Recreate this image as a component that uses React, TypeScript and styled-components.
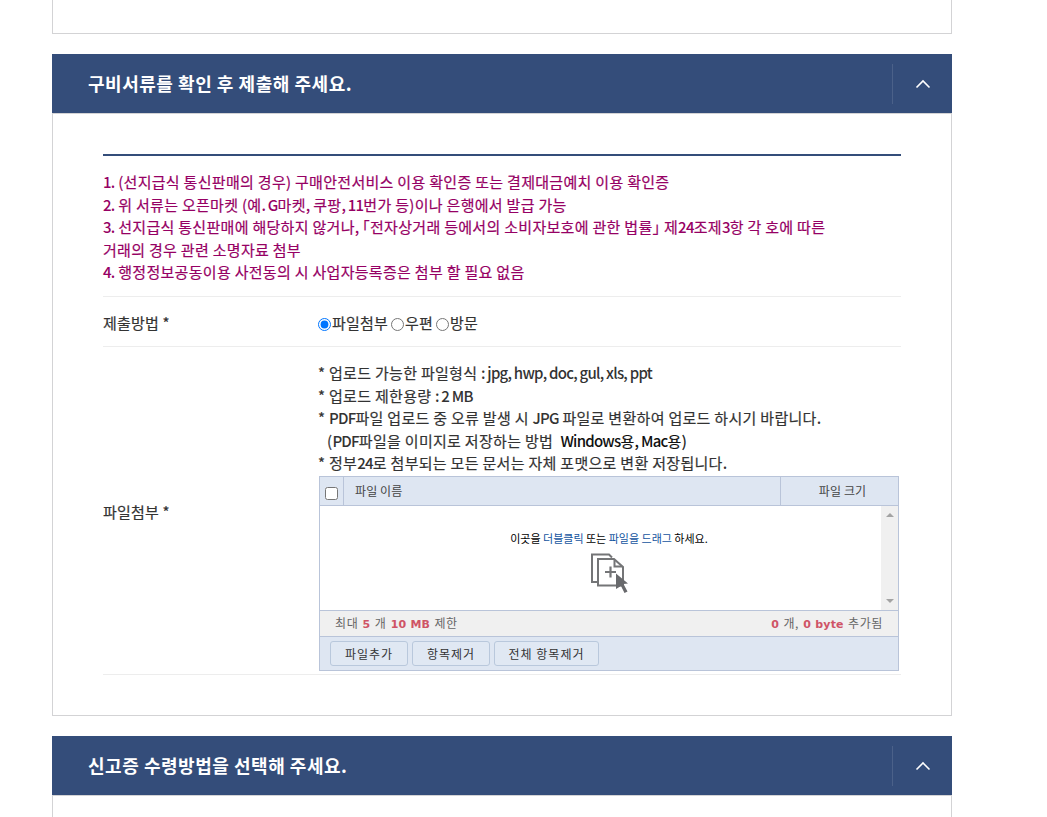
import React from "react";
import styled, { createGlobalStyle } from "styled-components";

interface LineProps {
  $track?: number;
  $indent?: number;
}

const GlobalStyle = createGlobalStyle`
  * {
    box-sizing: border-box;
  }
  body {
    margin: 0;
    background-color: #fff;
    color: #333;
    font-family: "Noto Sans CJK KR", "Noto Sans", sans-serif;
    font-size: 15px;
    line-height: 22.5px;
  }
`;

const Page = styled.main`
  display: flex;
  flex-direction: column;
  gap: 20px;
  width: 900px;
  height: 817px;
  margin-left: 52px;
  overflow: hidden;
`;

const PreviousPanel = styled.div`
  flex-shrink: 0;
  height: 34px;
  border: 1px solid #d3d3d5;
  border-top: 0;
`;

const Section = styled.section`
  flex-shrink: 0;
`;

const PanelHeader = styled.header`
  display: flex;
  align-items: center;
  justify-content: space-between;
  height: 59px;
  padding-left: 36px;
  background-color: #344d7a;
`;

const PanelTitle = styled.h2`
  margin: 0;
  color: #fff;
  font-size: 18px;
  font-weight: 700;
  letter-spacing: 0.53px;
  white-space: nowrap;
`;

const ToggleButton = styled.button`
  display: flex;
  align-items: center;
  justify-content: center;
  width: 60px;
  height: 40px;
  padding: 0;
  border: 0;
  border-left: 1px solid #4b6189;
  background: none;
`;

const PanelBody = styled.div<{ $height: number; $open?: boolean }>`
  height: ${({ $height }) => $height}px;
  padding: 40px 50px 0;
  border: 1px solid #d3d3d5;
  border-bottom-width: ${({ $open }) => ($open ? 0 : 1)}px;
`;

const Form = styled.div`
  border-top: 2px solid #344d7a;
`;

const Notice = styled.div`
  height: 141px;
  padding-top: 15px;
  border-bottom: 1px solid #ededed;
  color: #960064;
`;

const Line = styled.div<LineProps>`
  height: 22.5px;
  padding-left: ${({ $indent = 0 }) => $indent}px;
  letter-spacing: ${({ $track = 0.3 }) => $track}px;
  white-space: pre;
  font-feature-settings: "halt";
  -webkit-text-stroke: 0.2px currentColor;
`;

const Latin = styled.span`
  font-weight: 500;
  letter-spacing: -0.75px;
  -webkit-text-stroke: 0;
`;

const Row = styled.div<{ $height: number }>`
  display: grid;
  grid-template-columns: 215px 1fr;
  align-items: center;
  height: ${({ $height }) => $height}px;
  padding-top: 4px;
  border-bottom: 1px solid #ededed;
`;

const RadioGroup = styled.div`
  display: flex;
  gap: 3px;
  -webkit-text-stroke: 0.2px currentColor;
`;

const RadioLabel = styled.label`
  display: flex;
  align-items: center;
  gap: 1px;
  letter-spacing: 0.2px;
  input {
    width: 13px;
    height: 13px;
    margin: 2px 0 0;
  }
`;

const FileCell = styled.div`
  align-self: start;
  padding-top: 11px;
`;

const Dark = styled.span`
  color: #111;
`;

const Uploader = styled.div`
  display: flex;
  flex-direction: column;
  width: 580px;
  height: 195px;
  margin: 1.5px 0 0 1px;
  border: 1px solid #b9c4d9;
  color: #444;
  font-size: 12px;
  line-height: 18px;
`;

const ListHeader = styled.div`
  display: grid;
  grid-template-columns: 24px 437px 1fr;
  height: 28px;
  background-color: #dee6f2;
`;

const HeadCell = styled.div<{ $align?: string }>`
  display: flex;
  align-items: center;
  justify-content: ${({ $align = "flex-start" }) => $align};
  padding: 0 0 0 11px;
  border-right: 1px solid #b9c4d9;
  letter-spacing: 0.1px;
  &:first-child {
    padding: 5px 0 0 5px;
  }
  &:last-child {
    padding: 0 0 0 6px;
    border-right: 0;
  }
  input {
    width: 13px;
    height: 13px;
    margin: 0;
  }
`;

const DropArea = styled.div`
  display: flex;
  height: 105px;
  border-top: 1px solid #b9c4d9;
  background-color: #fff;
`;

const DropHint = styled.div`
  display: flex;
  flex: 1;
  flex-direction: column;
  align-items: center;
  padding: 23px 0 0 17px;
  color: #000;
  font-size: 11px;
`;

const HintText = styled.div`
  margin-bottom: 6px;
  white-space: nowrap;
  em {
    color: #1454a0;
    font-style: normal;
  }
`;

const ScrollBar = styled.div`
  display: flex;
  flex-direction: column;
  align-items: center;
  justify-content: space-between;
  width: 17px;
  padding: 7px 0;
  background-color: #f0f0f0;
`;

const Arrow = styled.i<{ $down?: boolean }>`
  border: 4px solid transparent;
  border-top-width: ${({ $down }) => ($down ? 4 : 0)}px;
  border-bottom-width: ${({ $down }) => ($down ? 0 : 4)}px;
  border-${({ $down }) => ($down ? "top" : "bottom")}-color: #a3a3a3;
`;

const StatusBar = styled.div`
  display: flex;
  align-items: center;
  justify-content: space-between;
  height: 26px;
  padding: 0 15px;
  border-top: 1px solid #b9c4d9;
  background-color: #f0f0f0;
  color: #666;
  letter-spacing: 0.6px;
  word-spacing: 1px;
  b {
    color: #cf5466;
    font-family: "DejaVu Sans", sans-serif;
    font-size: 11px;
    letter-spacing: 0.2px;
    word-spacing: 0;
  }
`;

const ButtonBar = styled.div`
  display: flex;
  flex: 1;
  gap: 4px;
  padding: 4px 10px;
  border-top: 1px solid #b9c4d9;
  background-color: #dee6f2;
`;

const BarButton = styled.button<{ $width: number }>`
  width: ${({ $width }) => $width}px;
  height: 25px;
  padding: 0 0 1px;
  border: 1px solid #b9c8dc;
  border-radius: 3px;
  background-color: #e0e8f3;
  color: #333;
  font-family: inherit;
  font-size: 12px;
  letter-spacing: 1px;
`;

// Latin letters and digits run tighter and slightly heavier than the hangul
const Mixed: React.FC<{ text: string }> = ({ text }) => {
  return (
    <>
      {text
        .split(/([A-Za-z0-9.,:]+(?: [A-Za-z0-9.,:]+)*)/)
        .map((part, index) => (index % 2 ? <Latin key={index}>{part}</Latin> : part))}
    </>
  );
};

interface PanelHeadingProps {
  title: string;
}

const PanelHeading: React.FC<PanelHeadingProps> = ({ title }) => {
  return (
    <PanelHeader>
      <PanelTitle>{title}</PanelTitle>
      <ToggleButton aria-label={title}>
        <svg width="16" height="10" viewBox="0 0 16 10" fill="none">
          <path d="M1.5 8.5L8 2L14.5 8.5" stroke="#fff" strokeWidth="1.6" />
        </svg>
      </ToggleButton>
    </PanelHeader>
  );
};

const CopyIcon: React.FC = () => {
  return (
    <svg width="38" height="41" viewBox="0 0 38 41" fill="none">
      <path d="M7 29H2V1.5H19L22 4.5" stroke="#747577" strokeWidth="2" />
      <path d="M8 6H24L33 14V32.5H8Z" fill="#fff" stroke="#747577" strokeWidth="2" />
      <path d="M24.5 7V13.5H32" stroke="#747577" strokeWidth="2" />
      <path d="M15 19H26M20.5 13.5V24.5" stroke="#747577" strokeWidth="2.2" />
      <path d="M26 20.5L38 30.5L33.5 31L37.5 38.5L34.5 40L31 33L26 36Z" fill="#68696c" />
    </svg>
  );
};

const noticeLines = [
  "1. (선지급식 통신판매의 경우) 구매안전서비스 이용 확인증 또는 결제대금예치 이용 확인증",
  "2. 위 서류는 오픈마켓 (예. G마켓, 쿠팡, 11번가 등)이나 은행에서 발급 가능",
  "3. 선지급식 통신판매에 해당하지 않거나, 「전자상거래 등에서의 소비자보호에 관한 법률」 제24조제3항 각 호에 따른",
  "거래의 경우 관련 소명자료 첨부",
  "4. 행정정보공동이용 사전동의 시 사업자등록증은 첨부 할 필요 없음",
];

const methods = ["파일첨부", "우편", "방문"];

const App: React.FC = () => {
  return (
    <>
      <GlobalStyle />
      <Page>
        <PreviousPanel />
        <Section>
          <PanelHeading title="구비서류를 확인 후 제출해 주세요." />
          <PanelBody $height={603}>
            <Form>
              <Notice>
                {noticeLines.map((line) => (
                  <Line key={line}>
                    <Mixed text={line} />
                  </Line>
                ))}
              </Notice>
              <Row $height={50}>
                <Line $track={0.2}>제출방법 *</Line>
                <RadioGroup>
                  {methods.map((method, index) => (
                    <RadioLabel key={method}>
                      <input type="radio" name="method" defaultChecked={index === 0} />
                      {method}
                    </RadioLabel>
                  ))}
                </RadioGroup>
              </Row>
              <Row $height={328}>
                <Line $track={0.2}>파일첨부 *</Line>
                <FileCell>
                  <Line>
                    <Mixed text="* 업로드 가능한 파일형식 : jpg, hwp, doc, gul, xls, ppt" />
                  </Line>
                  <Line>
                    <Mixed text="* 업로드 제한용량 : 2 MB" />
                  </Line>
                  <Line>
                    <Mixed text="* PDF파일 업로드 중 오류 발생 시 JPG 파일로 변환하여 업로드 하시기 바랍니다." />
                  </Line>
                  <Line $indent={9}>
                    <Mixed text="(PDF파일을 이미지로 저장하는 방법  " />
                    <Dark>
                      <Mixed text="Windows용, Mac용)" />
                    </Dark>
                  </Line>
                  <Line>
                    <Mixed text="* 정부24로 첨부되는 모든 문서는 자체 포맷으로 변환 저장됩니다." />
                  </Line>
                  <Uploader>
                    <ListHeader>
                      <HeadCell>
                        <input type="checkbox" />
                      </HeadCell>
                      <HeadCell>파일 이름</HeadCell>
                      <HeadCell $align="center">파일 크기</HeadCell>
                    </ListHeader>
                    <DropArea>
                      <DropHint>
                        <HintText>
                          이곳을 <em>더블클릭</em> 또는 <em>파일을 드래그</em> 하세요.
                        </HintText>
                        <CopyIcon />
                      </DropHint>
                      <ScrollBar>
                        <Arrow />
                        <Arrow $down />
                      </ScrollBar>
                    </DropArea>
                    <StatusBar>
                      <span>
                        최대 <b>5</b> 개 <b>10 MB</b> 제한
                      </span>
                      <span>
                        <b>0</b> 개, <b>0 byte</b> 추가됨
                      </span>
                    </StatusBar>
                    <ButtonBar>
                      <BarButton $width={78}>파일추가</BarButton>
                      <BarButton $width={78}>항목제거</BarButton>
                      <BarButton $width={105}>전체 항목제거</BarButton>
                    </ButtonBar>
                  </Uploader>
                </FileCell>
              </Row>
            </Form>
          </PanelBody>
        </Section>
        <Section>
          <PanelHeading title="신고증 수령방법을 선택해 주세요." />
          <PanelBody $height={22} $open />
        </Section>
      </Page>
    </>
  );
};

export default App;
